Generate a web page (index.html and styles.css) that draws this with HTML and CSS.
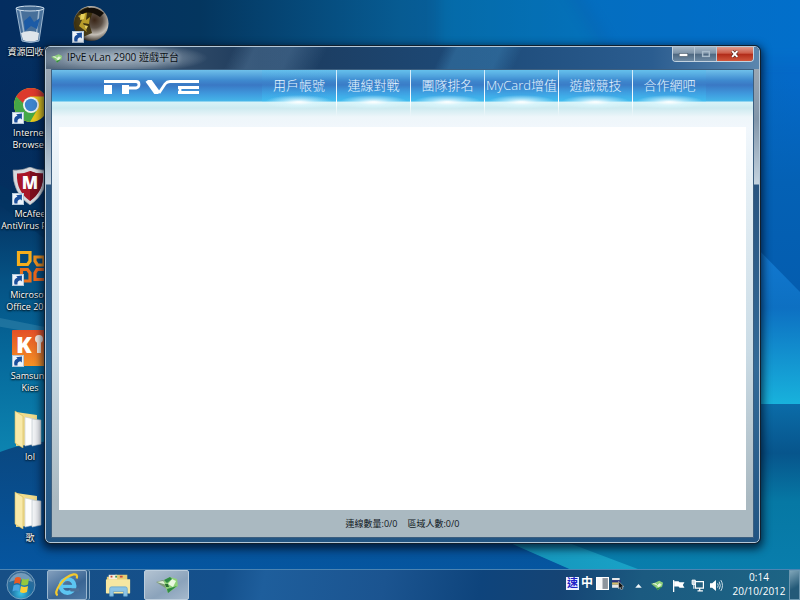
FILE: index.html
```html
<!DOCTYPE html>
<html lang="zh-Hant">
<head>
<meta charset="utf-8">
<meta name="viewport" content="width=device-width, initial-scale=1">
<title>IPvE vLan 2900 遊戲平台</title>
<link rel="stylesheet" href="styles.css">
</head>
<body>
<svg class="defs" aria-hidden="true">
  <defs>
    <symbol id="shortcut" viewBox="0 0 12 12">
      <rect x=".5" y=".5" width="11" height="11" fill="#edf4fa" stroke="#b4c8da"/>
      <path d="M2.500 10.500C1.500 6.500 3 4.300 5.500 3.800L4.200 2.300 10 1.600 9.800 7.500 8.300 6.200C6.300 6.500 5.200 8 5.500 10.500Z" fill="#1b4f9c"/>
    </symbol>
    <symbol id="leaf" viewBox="0 0 14 12">
      <path d="M0 4 4 3 7 6 6 9Z" fill="#7fbd70"/>
      <path d="M4 3 9 1 13 3 12 7 7 11 5 7Z" fill="#8fd07c"/>
      <path d="M2 4 5 4 7 6M7 6 9 4 11 5 8 8Z" fill="#e8f8df" stroke="#e8f8df" stroke-width=".8"/>
      <path d="M6 9 12 7 7 11Z" fill="#2f8a3d"/>
    </symbol>
    <symbol id="folder" viewBox="0 0 28 38">
      <path d="M2 2 23 5V34L2 36Z" fill="#f0dc8c"/>
      <path d="M11 7 20 9V34L11 36Z" fill="#fdfdfd" stroke="#c2c9d0" stroke-width=".6"/>
      <path d="M18 9 27 10V34L18 36Z" fill="#f3f5f7" stroke="#b9c2c9" stroke-width=".6"/>
      <path d="M1 1 9 6V38L1 33Z" fill="#f8e9a8" stroke="#d3b85a" stroke-width=".6"/>
    </symbol>
  </defs>
</svg>

<main class="desktop">
  <svg class="wallpaper" viewBox="0 0 800 600" preserveAspectRatio="none" aria-hidden="true">
    <defs>
      <filter id="soft" x="-20%" y="-20%" width="140%" height="140%"><feGaussianBlur stdDeviation="7"/></filter>
      <linearGradient id="wTop" x1="0" y1="0" x2="1" y2="0"><stop offset="0" stop-color="#042d60"/><stop offset=".25" stop-color="#04365f"/><stop offset=".5" stop-color="#075b92"/><stop offset=".72" stop-color="#0667b4"/><stop offset="1" stop-color="#0469c8"/></linearGradient>
      <linearGradient id="wLeft" x1="0" y1="0" x2="0" y2="1"><stop offset="0" stop-color="#02285a" stop-opacity="0"/><stop offset=".35" stop-color="#04305f"/><stop offset=".55" stop-color="#055284"/><stop offset=".75" stop-color="#066a9c"/><stop offset="1" stop-color="#0d86b2"/></linearGradient>
      <linearGradient id="wLow" x1="0" y1="0" x2="0" y2="1"><stop offset="0" stop-color="#0a477f"/><stop offset="1" stop-color="#0459a8"/></linearGradient>
      <linearGradient id="wSide" x1="0" y1="0" x2="0" y2="1"><stop offset="0" stop-color="#0461b5" stop-opacity="0"/><stop offset=".3" stop-color="#0461b5"/><stop offset="1" stop-color="#0458a8"/></linearGradient>
      <linearGradient id="wRay" x1="0" y1="0" x2="0" y2="1"><stop offset="0" stop-color="#1681e0"/><stop offset=".55" stop-color="#0d70c2"/><stop offset="1" stop-color="#18b2dc"/></linearGradient>
      <linearGradient id="wRight" x1="0" y1="0" x2="0" y2="1"><stop offset="0" stop-color="#0b6ca8"/><stop offset=".25" stop-color="#07558c"/><stop offset=".5" stop-color="#0678a4"/><stop offset="1" stop-color="#0a80b0"/></linearGradient>
      <linearGradient id="wCyan" x1="0" y1="0" x2="1" y2="0"><stop offset="0" stop-color="#1492b8"/><stop offset="1" stop-color="#1cabcf"/></linearGradient>
    </defs>
    <rect width="800" height="600" fill="url(#wTop)"/>
    <g filter="url(#soft)">
      <path d="M440 -20H560L610 60H440Z" fill="#0a80c4" opacity=".35"/>
      <path d="M570 -20H820V60H620Z" fill="#0478d0" opacity=".4"/>
    </g>
    <path d="M0 60H200V460H0Z" fill="url(#wLeft)"/>
    <path d="M0 185 60 215V250L0 205Z" fill="#023460" opacity=".6"/>
    <path d="M-10 316 60 330V337L-10 325Z" fill="#4492b5" opacity=".4"/>
    <path d="M0 452Q30 440 90 438H600V600H0Z" fill="url(#wLow)"/>
    <path d="M700 80H800V420H700Z" fill="url(#wSide)"/>
    <path d="M700 190 800 292V404H700Z" fill="url(#wRay)"/>
    <path d="M700 404H800V600H640L500 538H700Z" fill="url(#wRight)"/>
    <path d="M490 534 640 600H720L545 534Z" fill="url(#wCyan)"/>
  </svg>

  <ul class="shortcuts">
    <li><a class="shortcut" href="#recycle">
      <span class="pic"><svg viewBox="0 0 40 38" aria-hidden="true">
        <path d="M6 3H34L29 36Q20 39 12 36Z" fill="#7fa5cb" fill-opacity=".55" stroke="#bad1e4" stroke-width=".8"/>
        <path d="M10 5 15 34M29 5 26 34" stroke="#d3e4f2" stroke-width="1.500" opacity=".6"/>
        <path d="M14 16 20 11 24 17 30 13 27 24 21 21 15 26Z" fill="#1c5ba6"/>
        <path d="M11 28Q20 24 29 28L28 35Q20 38 13 35Z" fill="#dfe5eb"/>
        <ellipse cx="20" cy="3.500" rx="14" ry="2.500" fill="#3f668e" stroke="#d2e2f0"/>
      </svg></span>
      <span class="name">資源回收筒</span></a></li>
    <li><a class="shortcut" href="#internet">
      <span class="pic"><svg viewBox="0 0 40 38" aria-hidden="true">
        <circle cx="21" cy="19" r="17" fill="#e8c81c"/>
        <path d="M6.300 10.500A17 17 0 0 0 20 36L27 24 14 22Z" fill="#45a846"/>
        <path d="M6.300 10.500 14 23 21 11Z" fill="#45a846"/>
        <path d="M6.300 10.500A17 17 0 0 1 35.700 10.500H20L13 17Z" fill="#dc3a2c"/>
        <circle cx="21" cy="19" r="8" fill="#f1f4f3"/><circle cx="21" cy="19" r="6.200" fill="#3c84cd"/>
      </svg><svg class="arrow" aria-hidden="true"><use href="#shortcut"/></svg></span>
      <span class="name">Internet<br>Browser</span></a></li>
    <li><a class="shortcut" href="#mcafee">
      <span class="pic"><svg viewBox="0 0 40 38" aria-hidden="true">
        <path d="M20 0Q28 4 37 3 38 26 20 38 2 26 3 3 12 4 20 0Z" fill="#d7dade" stroke="#8c9299" stroke-width=".6"/>
        <path d="M20 4Q27 7 33 6.500 34 24 20 34 6 24 7 6.500 13 7 20 4Z" fill="#a81628"/>
        <path d="M20 4Q27 7 33 6.500 34 24 20 34Z" fill="#7c0d1c"/>
        <text x="20" y="22" text-anchor="middle" font-size="17" class="mark">M</text>
      </svg><svg class="arrow" aria-hidden="true"><use href="#shortcut"/></svg></span>
      <span class="name">McAfee<br>AntiVirus Plus</span></a></li>
    <li><a class="shortcut" href="#office">
      <span class="pic"><svg viewBox="0 0 40 38" fill="none" stroke-width="3.200" aria-hidden="true">
        <path d="M14 16.500H8.500V4.500H20V11" stroke="#f6ae1c"/>
        <path d="M20 11V13L17.500 16.500H14" stroke="#f6ae1c"/>
        <path d="M29 17H34V9H25V13L27.500 17H29" stroke="#f0901c"/>
        <path d="M16 21.500H11.500V33H20V25L17.500 21.500H16" stroke="#e8701c"/>
        <path d="M28 21.500H36V31.500H25V25L27 21.500H29" stroke="#ee681c"/>
      </svg><svg class="arrow" aria-hidden="true"><use href="#shortcut"/></svg></span>
      <span class="name">Microsoft<br>Office 2010</span></a></li>
    <li><a class="shortcut" href="#kies">
      <span class="pic"><svg viewBox="0 0 40 38" aria-hidden="true">
        <defs><linearGradient id="kies" x1="0" y1="0" x2="0" y2="1"><stop offset="0" stop-color="#e35028"/><stop offset="1" stop-color="#f59225"/></linearGradient></defs>
        <rect x="2" y="1" width="36" height="36" rx="1" fill="url(#kies)"/>
        <text x="6" y="24" font-size="23" class="mark">K</text>
        <circle cx="29" cy="10" r="4" fill="#f5e9df"/><path d="M27 12H31V24H27Z" fill="#f5e9df"/>
      </svg><svg class="arrow" aria-hidden="true"><use href="#shortcut"/></svg></span>
      <span class="name">Samsung<br>Kies</span></a></li>
    <li><a class="shortcut" href="#lol"><span class="pic"><svg class="folder" aria-hidden="true"><use href="#folder"/></svg></span><span class="name">lol</span></a></li>
    <li><a class="shortcut" href="#songs"><span class="pic"><svg class="folder" aria-hidden="true"><use href="#folder"/></svg></span><span class="name">歌</span></a></li>
    <li><a class="shortcut" href="#game" aria-label="遊戲">
      <span class="pic"><svg viewBox="0 0 40 38" aria-hidden="true">
        <defs><radialGradient id="orb" cx=".6" cy=".4" r=".65"><stop offset="0" stop-color="#3a2516"/><stop offset=".35" stop-color="#5c5046"/><stop offset=".65" stop-color="#c4bfb7"/><stop offset=".85" stop-color="#6e675e"/><stop offset="1" stop-color="#17120c"/></radialGradient></defs>
        <circle cx="21" cy="18.500" r="17.500" fill="url(#orb)"/>
        <path d="M4 18A17 17 0 0 1 18 2L23 6 19 18 22 28 13 32Q4 27 4 18Z" fill="#3a2d08" opacity=".9"/>
        <path d="M8 11 17 7 16 15 20 12 19 19 13 18 17 27 9 21 12 15Z" fill="#b99c2a"/>
        <path d="M11 9 15 9 14 14 10 15ZM14 20 18 21 16 25Z" fill="#e6cf5c"/>
        <path d="M9 7Q22 -2 34 8L30 12Q20 5 12 9Z" fill="#130e08"/>
      </svg><svg class="arrow" aria-hidden="true"><use href="#shortcut"/></svg></span></a></li>
  </ul>

  <section class="window" aria-label="IPvE vLan 2900 遊戲平台">
    <header class="titlebar">
      <svg class="leaf" aria-hidden="true"><use href="#leaf"/></svg>
      <h1 class="caption">IPvE vLan 2900 遊戲平台</h1>
      <div class="controls">
        <button type="button" aria-label="最小化"><svg viewBox="0 0 22 14"><rect x="6.500" y="6.500" width="9" height="3" fill="#fff" stroke="#4b5a68" stroke-width=".6"/></svg></button>
        <button type="button" aria-label="最大化" disabled><svg viewBox="0 0 22 14"><rect x="8" y="4.500" width="7" height="5" fill="none" stroke="#a9bccb" stroke-width="1.500"/></svg></button>
        <button type="button" class="close" aria-label="關閉"><svg viewBox="0 0 38 14"><path d="M16 4 21.500 10M21.500 4 16 10" stroke="#61291f" stroke-width="3.400"/><path d="M16 4 21.500 10M21.500 4 16 10" stroke="#fff" stroke-width="2"/></svg></button>
      </div>
    </header>
    <div class="client">
      <div class="banner">
        <svg class="logo" viewBox="0 0 95 14" role="img" aria-label="IPVE">
          <g fill="none" stroke="#fff" stroke-width="2.800">
            <path d="M0 1.500H32Q35 1.500 35 4.500T32 8H18"/>
            <path d="M0 9.500H8M18 9.500H25" stroke-width="9"/>
            <path d="M44 0 54 14" stroke-width="6"/>
            <path d="M95 1.500H66Q63 1.500 61 4L55 13"/>
            <path d="M74 7.500H95M74 12.500H95M76 7V13"/>
          </g>
        </svg>
        <nav class="menu">
          <a href="#account">用戶帳號</a>
          <a href="#battle">連線對戰</a>
          <a href="#ranking">團隊排名</a>
          <a href="#mycard">MyCard增值</a>
          <a href="#compete">遊戲競技</a>
          <a href="#cafes">合作網吧</a>
        </nav>
      </div>
      <div class="page"></div>
      <footer class="status"><span>連線數量:0/0</span><span>區域人數:0/0</span></footer>
    </div>
  </section>
</main>

<footer class="taskbar">
  <button type="button" class="start" aria-label="開始"><svg viewBox="0 0 30 30">
    <defs><radialGradient id="start" cx=".5" cy=".8" r=".8"><stop offset="0" stop-color="#3cc4e6"/><stop offset=".45" stop-color="#1b6ca2"/><stop offset="1" stop-color="#3e6a92"/></radialGradient></defs>
    <circle cx="15" cy="15" r="14" fill="url(#start)" stroke="#86a9c5" stroke-width=".8"/>
    <path d="M3 12A12.500 12.500 0 0 1 27 12Q15 7 3 12Z" fill="#c4d8e6" opacity=".45"/>
    <path d="M9 8Q12 6 15 8L14 14Q11 12 8 14Z" fill="#ea5a24"/><path d="M16 8.500Q19 10.500 23 8.500L22 14.500Q18 16.500 15 14.500Z" fill="#93c83e"/>
    <path d="M7.500 15.500Q11 13.500 14 15.500L13 21.500Q10 19.500 6.500 21.500Z" fill="#4aa5e2"/><path d="M15 16Q18 18 22 16L21 22Q17 24 14 22Z" fill="#fccd35"/>
  </svg></button>
  <button type="button" class="task stacked" aria-label="Internet Explorer"><svg viewBox="0 0 30 28">
    <circle cx="15.500" cy="15" r="7.500" fill="none" stroke="#5cc6f2" stroke-width="4.500"/>
    <path d="M9 15.500H24.500" stroke="#5cc6f2" stroke-width="3.400"/><path d="M17 17.500H28V21H19Z" fill="#4a7098"/>
    <path d="M5 25Q1 23 7 14 14 4 22 2.500 27 2 25.500 7" fill="none" stroke="#f4c92d" stroke-width="2.400"/>
  </svg></button>
  <button type="button" class="task plain" aria-label="檔案總管"><svg viewBox="0 0 30 28">
    <path d="M3 5H10L12 3H25V8H28V23H3Z" fill="#e7cd74"/><path d="M5 3H14V8H5Z" fill="#f8eeda"/>
    <path d="M7 4H9V6H7ZM17 4H20V6H17Z" fill="#c9493a"/><path d="M12 4H14V6H12Z" fill="#439a57"/>
    <path d="M2 8H28V23H2Z" fill="#f7e7a2"/><path d="M6 26V18Q6 16 8 16H23Q25 16 25 18V26H21V21H10V26Z" fill="#8cc4e6" stroke="#5f9fc8" stroke-width=".7"/>
  </svg></button>
  <button type="button" class="task active" aria-label="IPvE vLan 2900"><svg viewBox="0 0 24 18">
    <path d="M1 6 8 4 14 9 12 13Z" fill="#7d9a78"/><path d="M2 6 8 5 12 9Z" fill="#dff0d6"/>
    <path d="M9 4 15 1 22 3 23 10 13 17 10 10Z" fill="#8fd278"/><path d="M13 8 17 3 21 5 18 11Z" fill="#eaf9e0"/>
    <path d="M12 13 22 10 13 17ZM9 4 15 1 17 3 12 7Z" fill="#2f8a45"/><path d="M10 8 13 8 14 11 11 11Z" fill="#2b6b34"/>
  </svg></button>
  <div class="tray">
    <div class="group language">
      <span class="ime word">速</span>
      <span class="ime">中</span>
      <svg viewBox="0 0 12 12" aria-hidden="true"><rect x=".5" y=".5" width="11" height="11" fill="#f6f7f8" stroke="#fff"/><rect x="6" y="1" width="5" height="10" fill="#8d959d"/></svg>
      <svg viewBox="0 0 12 12" aria-hidden="true"><path d="M1 1H8V3H1ZM1 7H8V10H1Z" fill="#e8e8e8"/><path d="M1 3H9V5H1Z" fill="#2c2f7c"/><path d="M1 5H8V7H1Z" fill="#d6bc6a"/><path d="M7 4 12 9H10L11 11 9 11.500 8.500 9.500 7 11Z" fill="#111" stroke="#ddd" stroke-width=".5"/></svg>
    </div>
    <div class="group">
      <svg viewBox="0 0 12 12" aria-hidden="true"><path d="M6 4.500 9 8H3Z" fill="#eef5f8"/></svg>
      <svg viewBox="0 0 14 12" aria-hidden="true"><use href="#leaf"/></svg>
    </div>
    <div class="group">
      <svg viewBox="0 0 12 12" aria-hidden="true"><path d="M1.500 1V12" stroke="#fff" stroke-width="1.200"/><path d="M2 2H6L7 3H11.500L10 5.500 11.500 8H7L6 7H2Z" fill="#fff"/></svg>
      <svg viewBox="0 0 12 12" aria-hidden="true"><path d="M4 2.500H11.500V8.500H4ZM6 11H11M8 9V11" fill="#25607f" stroke="#fff" stroke-width="1.200"/><path d="M1 1H4V5H1ZM2.500 5V9" fill="#ccd9e2" stroke="#fff" stroke-width=".8"/></svg>
      <svg viewBox="0 0 12 12" aria-hidden="true"><path d="M0 4H2L5.500 1V11L2 8H0Z" fill="#fff"/><path d="M7 4Q8.200 6 7 8M8.500 2.500Q10.500 6 8.500 9.500M10 1Q13 6 10 11" fill="none" stroke="#d2e2ea" stroke-width=".9"/></svg>
    </div>
  </div>
  <time class="clock" datetime="2012-10-20T00:14"><span>0:14</span><span>20/10/2012</span></time>
  <button type="button" class="peek" aria-label="顯示桌面"></button>
</footer>
</body>
</html>
```
FILE: styles.css
```css
* { box-sizing: border-box; }

body {
  margin: 0;
  height: 100vh;
  display: flex;
  flex-direction: column;
  overflow: hidden;
  background: #0459a8;
  font: 10px/12px "Open Sans", "Noto Sans CJK TC", sans-serif;
}

button { margin: 0; padding: 0; border: 0; background: none; font: inherit; }
a { color: inherit; text-decoration: none; }
svg { display: block; }
.defs { position: absolute; width: 0; height: 0; }

/* Desktop */
.desktop { position: relative; flex: 1; min-height: 0; }
.wallpaper { position: absolute; top: 0; left: 0; width: 100%; height: 100vh; }

.shortcuts {
  position: relative;
  display: grid;
  grid-auto-flow: column;
  grid-template-rows: repeat(7, 81px);
  grid-auto-columns: 60px;
  margin: 0;
  padding: 5px 0 0;
  list-style: none;
}
.shortcut { display: flex; flex-direction: column; align-items: center; gap: 3px; color: #fff; }
.pic { position: relative; width: 40px; height: 38px; }
.pic svg { width: 40px; height: 38px; }
.pic .folder { width: 28px; margin: 0 auto 0 4px; }
.pic .arrow { position: absolute; left: 2px; bottom: 0; width: 12px; height: 12px; }
.name { font-size: 9px; text-align: center; white-space: nowrap; text-shadow: 0 1px 2px #000, 0 0 2px #000; }
.mark { font-family: "Open Sans", sans-serif; font-weight: 800; fill: #fff; }

/* Application window */
.window {
  position: absolute;
  inset: 46px 40px 26px 45px;
  display: flex;
  flex-direction: column;
  padding: 0 5px 4px;
  border: 1px solid #b5c8d8;
  border-radius: 5px;
  outline: 1px solid #10202f;
  background:
    linear-gradient(#9aa6b2 0, #8296aa 50px, #c4d3df 115px, #2a5580 116px, #336a98 300px, #205280 100%) 0 22px / 100% 100% no-repeat,
    #284d73;
  box-shadow: 0 3px 9px 3px rgba(0, 12, 32, .75);
}
.titlebar {
  display: flex;
  align-items: center;
  gap: 4px;
  flex: 0 0 22px;
  margin: 0 -5px;
  padding: 0 5px;
  border-radius: 4px 4px 0 0;
  background:
    radial-gradient(ellipse 90px 15px at 72px 11px, rgba(190, 202, 212, .75), rgba(170, 185, 198, .5) 60%, transparent),
    linear-gradient(115deg, transparent 26%, rgba(120, 160, 195, .3) 29% 34%, transparent 39% 55%, rgba(60, 130, 180, .45) 57% 63%, transparent 66%),
    linear-gradient(90deg, #55687c, #1c3a5c 30%, #1d4a78 60%, #2b5d90 85%, #5b86ae);
}
.leaf { width: 12px; height: 11px; }
.caption { margin: 0; font-size: 10px; font-weight: 400; line-height: 18px; padding-bottom: 2px; color: #0a0f14; text-shadow: 0 0 5px #d5dde4; }
.controls {
  display: flex;
  align-self: flex-start;
  margin-left: auto;
  border: 1px solid #c3d3e0;
  border-top: 0;
  border-radius: 0 0 4px 4px;
  overflow: hidden;
}
.controls button { width: 22px; height: 14px; border-right: 1px solid #b7c7d5; background: linear-gradient(#a3b5c5, #7f94a8 45%, #4d6780 50%, #6e8aa3); }
.controls .close { width: 36px; border: 0; background: linear-gradient(#dd9a8c, #cd5c48 45%, #b02a18 50%, #d0573c); }
.controls svg { width: 100%; height: 14px; }

.client {
  flex: 1;
  min-height: 0;
  display: flex;
  flex-direction: column;
  border: 1px solid #3c5f80;
  background: linear-gradient(#f1f7fc 58px, #e6f0f6 110px, #cbdce6 60%, #aab9c1 92%);
}
.banner {
  display: flex;
  align-items: flex-start;
  flex: 0 0 57px;
  padding: 0 47px 0 52px;
  background: linear-gradient(#6fc0ea 0, #3f8bd0 10px, #3a78c4 15px, #3f9ade 24px, #45b5e8 31px, #d8f3f8 32px, #cdeaf0 38px, #eef6fa 47px, #f1f7fc);
}
.logo { width: 95px; height: 14px; margin-top: 10px; }
.menu { display: flex; margin-left: auto; }
.menu a {
  width: 74px;
  height: 46px;
  border-style: solid;
  border-width: 0 0 0 1px;
  border-image: linear-gradient(#cfeafa, #fff 70%, rgba(255, 255, 255, 0)) 1;
  background:
    radial-gradient(ellipse 34px 7px at 50% 32px, #fff, rgba(220, 248, 255, .6) 45%, transparent),
    linear-gradient(rgba(60, 190, 245, .2), transparent 12px, rgba(60, 200, 250, .35) 31px, transparent 32px);
  color: #e6f5ff;
  font-size: 13px;
  font-weight: 300;
  line-height: 31px;
  text-align: center;
  white-space: nowrap;
}
.menu a:first-child { border-image: none; border-width: 0; }
.page { flex: 1; min-height: 0; margin: 0 7px; background: #fff; }
.status { display: flex; justify-content: center; gap: 10px; flex: 0 0 27px; color: #10181e; font-size: 9px; line-height: 27px; }

/* Taskbar */
.taskbar {
  position: relative;
  display: flex;
  align-items: stretch;
  flex: 0 0 31px;
  border-top: 1px solid #4c84b2;
  background: linear-gradient(100deg, #174f86 0, #14508c 28%, #1e5e9c 33%, #1b5490 48%, #0e447c 60%, #154474 70%, #1b5a80 80%, #1d6585);
  color: #fff;
}
.start { width: 30px; margin: 0 11px 0 6px; }
.start svg { width: 30px; height: 30px; }
.task { width: 40px; border: 1px solid #9cb8d0; border-radius: 2px; background: linear-gradient(150deg, #839fbd, #3a6593 60%, #4e7aa6); }
.task svg { width: 30px; height: 26px; margin: 0 auto; }
.task.stacked { box-shadow: 2px 0 0 #285985, 3px 0 0 #86a8c4; }
.task.plain { width: 44px; margin: 0 4px 0 9px; border-color: transparent; background: none; }
.task.active { width: 45px; border-color: #bccddc; background: linear-gradient(150deg, #b3c3d2, #8ba3bb 60%, #a5b9cc); }
.task.active svg { height: 18px; width: 24px; }
.tray { display: flex; align-items: center; gap: 8px; margin-left: auto; padding-right: 6px; }
.group { display: flex; align-items: center; gap: 6px; }
.group svg { width: 13px; height: 13px; }
.language { gap: 2px; padding-bottom: 4px; }
.ime { width: 13px; height: 13px; font-size: 12px; font-weight: 700; line-height: 12px; }
.word { background: #eef0ff; color: #1c22c8; font-size: 11px; text-align: center; }
.clock { display: flex; flex-direction: column; align-items: center; width: 60px; line-height: 14px; }
.peek { width: 11px; border: 1px solid #6d98b0; background: linear-gradient(150deg, #7fa5b8, #245a78 60%); }
```
